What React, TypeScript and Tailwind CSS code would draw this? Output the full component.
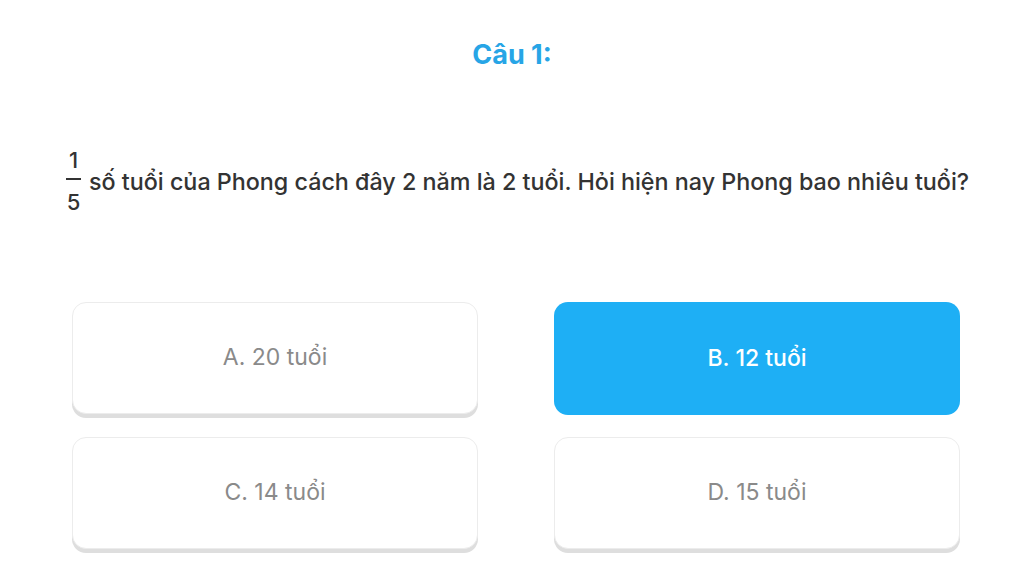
import React from 'react'

const options = [
  { key: 'A', label: 'A. 20 tuổi', selected: false },
  { key: 'B', label: 'B. 12 tuổi', selected: true },
  { key: 'C', label: 'C. 14 tuổi', selected: false },
  { key: 'D', label: 'D. 15 tuổi', selected: false },
]

function Fraction({ num, den }: { num: string; den: string }) {
  return (
    <span className="inline-flex flex-col items-center text-[22px] leading-[24px] font-medium mr-[8px]">
      <span>{num}</span>
      <span className="block w-[15px] h-[2px] bg-[#333] mt-[6px] mb-[10px]" />
      <span>{den}</span>
    </span>
  )
}

export default function App() {
  return (
    <div
      className="w-[1024px] h-[574px] bg-white overflow-hidden"
      style={{ fontFamily: 'Inter, Roboto, "Noto Sans", sans-serif' }}
    >
      <h1 className="pt-[39px] text-center text-[27px] leading-[32px] font-bold text-[#27a5e6]">
        Câu 1:
      </h1>

      <div className="mt-[77px] pl-[66px] flex items-center text-[#333]">
        <Fraction num="1" den="5" />
        <p className="text-[23.3px] leading-[28px] font-medium pt-[1px]">
          số tuổi của Phong cách đây 2 năm là 2 tuổi. Hỏi hiện nay Phong bao nhiêu tuổi?
        </p>
      </div>

      <div className="mt-[88px] mx-[72px] grid grid-cols-2 gap-x-[76px] gap-y-[22px] w-[888px]">
        {options.map((o) =>
          o.selected ? (
            <div
              key={o.key}
              className="h-[113px] rounded-[14px] bg-[#1eaff5] flex items-center justify-center text-white text-[23px] font-medium"
            >
              {o.label}
            </div>
          ) : (
            <div
              key={o.key}
              className="h-[112px] rounded-[14px] bg-white border border-[#ececec] shadow-[0_4px_0_#dedede] flex items-center justify-center text-[#8a8a8a] text-[23px] pb-[2px]"
            >
              {o.label}
            </div>
          ),
        )}
      </div>
    </div>
  )
}
